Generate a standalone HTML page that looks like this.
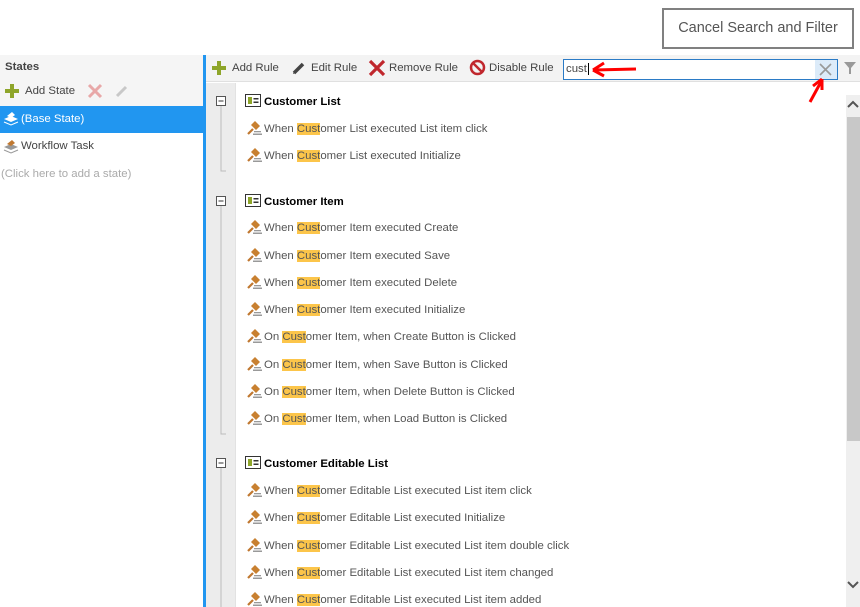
<!DOCTYPE html>
<html><head><style>
*{margin:0;padding:0;box-sizing:border-box}
body{width:860px;height:607px;overflow:hidden;background:#fff;font-family:"Liberation Sans",sans-serif;position:relative}
.a{position:absolute;white-space:nowrap}
.t{font-size:11.4px;color:#444}
.r{font-size:11.4px;color:#555;margin-top:1px}
.h{font-size:11.4px;color:#000;font-weight:bold;margin-top:1px}
mark{background:#fcc54a;color:#555}
</style></head><body>
<div class="a" style="left:662px;top:8px;width:192px;height:41px;border:2px solid #808080;font-size:14.5px;color:#555;line-height:37px;text-align:center">Cancel Search and Filter</div>

<div class="a" style="left:0;top:55px;width:203px;height:51px;background:#f5f5f5"></div>
<div class="a h" style="left:5px;top:60px;color:#444">States</div>
<svg class="a" style="left:4px;top:83px" width="16" height="16"><rect x="6" y="1" width="4" height="14" fill="#8ea52a"/><rect x="1" y="6" width="14" height="4" fill="#8ea52a"/></svg>
<div class="a t" style="left:25px;top:85px">Add State</div>
<svg class="a" style="left:87px;top:83px" width="16" height="16"><path d="M2 2L14 14M14 2L2 14" stroke="#e8a8a8" stroke-width="3"/></svg>
<svg class="a" style="left:114px;top:83px" width="16" height="16"><path d="M3 13L12 4" stroke="#c8c8c8" stroke-width="3"/></svg>
<div class="a" style="left:0;top:106px;width:203px;height:27px;background:#2196f0"></div>
<svg class="a" style="left:3px;top:110px" width="16" height="16"><path d="M1 9L8 12L15 9L8 6Z" fill="#fff"/><path d="M1 12L8 15L15 12" stroke="#fff" fill="none"/><path d="M4 6L9 2L12 5L8 8Z" fill="#fff"/></svg>
<div class="a t" style="left:21px;top:113px;color:#fff">(Base State)</div>
<svg class="a" style="left:3px;top:138px" width="16" height="16"><path d="M1 9L8 12L15 9L8 6Z" fill="#999"/><path d="M1 12L8 15L15 12" stroke="#999" fill="none"/><path d="M4 6L9 2L12 5L8 8Z" fill="#c07830"/></svg>
<div class="a t" style="left:21px;top:140px">Workflow Task</div>
<div class="a t" style="left:1px;top:168px;color:#aaa">(Click here to add a state)</div>
<div class="a" style="left:203px;top:55px;width:3px;height:552px;background:#2196f0"></div>

<div class="a" style="left:206px;top:55px;width:654px;height:27px;background:#f3f3f3;border-bottom:1px solid #e0e0e0"></div>
<svg class="a" style="left:211px;top:60px" width="16" height="16"><rect x="6" y="1" width="4" height="14" fill="#8ea52a"/><rect x="1" y="6" width="14" height="4" fill="#8ea52a"/></svg>
<div class="a t" style="left:232px;top:62px">Add Rule</div>
<svg class="a" style="left:291px;top:60px" width="16" height="16"><path d="M3 13L12 4" stroke="#444" stroke-width="3.5"/><path d="M2 14L3 11L5 13Z" fill="#444"/></svg>
<div class="a t" style="left:311px;top:62px">Edit Rule</div>
<svg class="a" style="left:368px;top:59px" width="18" height="18"><path d="M2 2L16 16M16 2L2 16" stroke="#c0272d" stroke-width="3.2"/></svg>
<div class="a t" style="left:389px;top:62px">Remove Rule</div>
<svg class="a" style="left:469px;top:59px" width="17" height="17"><circle cx="8.5" cy="8.5" r="6.5" stroke="#c0272d" stroke-width="2.5" fill="none"/><path d="M4 4L13 13" stroke="#c0272d" stroke-width="2.5"/></svg>
<div class="a t" style="left:489px;top:62px">Disable Rule</div>
<div class="a" style="left:563px;top:59px;width:275px;height:21px;border:1px solid #2b7bc6;background:#fff"></div>
<div class="a" style="left:815px;top:60px;width:22px;height:19px;background:#dcebf9"></div>
<svg class="a" style="left:819px;top:63px" width="13" height="13"><path d="M1 1L12 12M12 1L1 12" stroke="#999" stroke-width="1.6"/></svg>
<div class="a" style="left:566px;top:63px;font-size:11.4px;color:#444">cust<span style="border-left:1px solid #000;margin-left:1px"></span></div>
<svg class="a" style="left:590px;top:60px" width="50" height="20"><path d="M4 10L46 9" stroke="#f00" stroke-width="3"/><path d="M3 10L14 3M3 10L14 16" stroke="#f00" stroke-width="3"/></svg>
<svg class="a" style="left:804px;top:76px" width="24" height="28"><path d="M6 26L18 4" stroke="#f00" stroke-width="3"/><path d="M18 3L9 10M18 3L18 14" stroke="#f00" stroke-width="3"/></svg>
<svg class="a" style="left:843px;top:61px" width="14" height="14"><path d="M1 1H13L8 7V13L6 13V7Z" fill="#999"/></svg>

<div class="a" style="left:206px;top:83px;width:30px;height:524px;background:#ececec;border-right:1px solid #e2e2e2"></div>
<div class="a" style="left:846px;top:95px;width:14px;height:512px;background:#efefef"></div>
<div class="a" style="left:847px;top:117px;width:13px;height:324px;background:#c8c8c8"></div>
<svg class="a" style="left:847px;top:99px" width="12" height="10"><path d="M1 8L6 3L11 8" stroke="#555" stroke-width="2" fill="none"/></svg>
<svg class="a" style="left:847px;top:580px" width="12" height="10"><path d="M1 2L6 7L11 2" stroke="#555" stroke-width="2" fill="none"/></svg>

<svg class="a" style="left:0;top:0" width="860" height="607">
<defs>
<g id="g"><path d="M2 14L7 9" stroke="#c07830" stroke-width="2.2"/><path d="M5 5L9 1L14 6L10 10Z" fill="#c88030"/><rect x="8" y="11" width="7" height="1.3" fill="#999"/><rect x="7" y="13.5" width="9" height="1.5" fill="#999"/></g>
<g id="l"><rect x="0.5" y="0.5" width="15" height="12" fill="#fff" stroke="#333"/><rect x="3" y="3" width="4" height="7" fill="#8ea52a"/><rect x="8.5" y="4" width="5" height="1.5" fill="#333"/><rect x="8.5" y="7.5" width="5" height="1.5" fill="#333"/></g>
<g id="m"><rect x="0.5" y="0.5" width="9" height="9" fill="#fff" stroke="#555"/><path d="M2.5 5H7.5" stroke="#333"/></g>
</defs>
<use href="#m" x="216" y="96"/><path d="M221 106V171H226" stroke="#bbb" fill="none"/>
<use href="#m" x="216" y="196"/><path d="M221 206V434H226" stroke="#bbb" fill="none"/>
<use href="#m" x="216" y="458"/><path d="M221 468V607" stroke="#bbb" fill="none"/>
<use href="#l" x="245" y="94"/><use href="#l" x="245" y="194"/><use href="#l" x="245" y="456"/>
<use href="#g" x="246" y="120"/><use href="#g" x="246" y="147"/>
<use href="#g" x="246" y="219"/><use href="#g" x="246" y="247"/><use href="#g" x="246" y="274"/><use href="#g" x="246" y="301"/><use href="#g" x="246" y="328"/><use href="#g" x="246" y="356"/><use href="#g" x="246" y="383"/><use href="#g" x="246" y="410"/>
<use href="#g" x="246" y="482"/><use href="#g" x="246" y="509"/><use href="#g" x="246" y="537"/><use href="#g" x="246" y="564"/><use href="#g" x="246" y="591"/>
</svg>

<div class="a h" style="left:264px;top:95px">Customer List</div>
<div class="a r" style="left:264px;top:122px">When <mark>Cust</mark>omer List executed List item click</div>
<div class="a r" style="left:264px;top:149px">When <mark>Cust</mark>omer List executed Initialize</div>
<div class="a h" style="left:264px;top:195px">Customer Item</div>
<div class="a r" style="left:264px;top:221px">When <mark>Cust</mark>omer Item executed Create</div>
<div class="a r" style="left:264px;top:249px">When <mark>Cust</mark>omer Item executed Save</div>
<div class="a r" style="left:264px;top:276px">When <mark>Cust</mark>omer Item executed Delete</div>
<div class="a r" style="left:264px;top:303px">When <mark>Cust</mark>omer Item executed Initialize</div>
<div class="a r" style="left:264px;top:330px">On <mark>Cust</mark>omer Item, when Create Button is Clicked</div>
<div class="a r" style="left:264px;top:358px">On <mark>Cust</mark>omer Item, when Save Button is Clicked</div>
<div class="a r" style="left:264px;top:385px">On <mark>Cust</mark>omer Item, when Delete Button is Clicked</div>
<div class="a r" style="left:264px;top:412px">On <mark>Cust</mark>omer Item, when Load Button is Clicked</div>
<div class="a h" style="left:264px;top:457px">Customer Editable List</div>
<div class="a r" style="left:264px;top:484px">When <mark>Cust</mark>omer Editable List executed List item click</div>
<div class="a r" style="left:264px;top:511px">When <mark>Cust</mark>omer Editable List executed Initialize</div>
<div class="a r" style="left:264px;top:539px">When <mark>Cust</mark>omer Editable List executed List item double click</div>
<div class="a r" style="left:264px;top:566px">When <mark>Cust</mark>omer Editable List executed List item changed</div>
<div class="a r" style="left:264px;top:593px">When <mark>Cust</mark>omer Editable List executed List item added</div>
</body></html>
